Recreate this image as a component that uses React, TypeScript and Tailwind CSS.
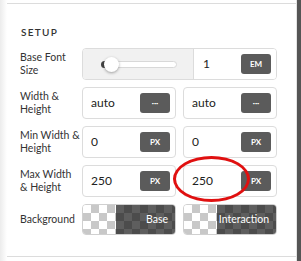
import React from "react";

const font = { fontFamily: 'Lato, "Open Sans", "Liberation Sans", sans-serif' };

function Btn({ children }: { children: React.ReactNode }) {
  return (
    <div className="flex h-[20px] w-[30px] shrink-0 items-center justify-center rounded-[3px] bg-[#5b5b5b] text-[8px] font-bold text-white">
      {children}
    </div>
  );
}

function Field({ value, unit }: { value: string; unit: string }) {
  return (
    <div className="flex h-[32px] w-[94px] items-center justify-between rounded-[4px] border border-[#dcdcdc] bg-white pl-[8px] pr-[5px] text-[12px] text-[#222]">
      <span>{value}</span>
      <Btn>{unit}</Btn>
    </div>
  );
}

function Label({ a, b }: { a: string; b?: string }) {
  return (
    <div className="w-[62px] shrink-0 whitespace-nowrap text-[10.5px] leading-[13px] text-[#333]">
      {a}
      {b && (
        <>
          <br />
          {b}
        </>
      )}
    </div>
  );
}

function Checker({ label }: { label: string }) {
  return (
    <div className="flex h-[31px] w-[94px] overflow-hidden rounded-[4px] border border-[#d0d0d0]">
      <div className="w-[33px] shrink-0 bg-[repeating-conic-gradient(#c8c8c8_0_25%,#ffffff_0_50%)] bg-[length:16px_16px]" />
      <div className="flex flex-1 items-center justify-end bg-[repeating-conic-gradient(#4c4c4c_0_25%,#5e5e5e_0_50%)] bg-[length:16px_16px] pr-[7px] text-[10.5px] text-white">
        {label}
      </div>
    </div>
  );
}

export default function App() {
  return (
    <div className="relative flex h-[261px] w-[301px] bg-white" style={font}>
      <div className="relative flex-1 border-r border-[#e4e4e4]">
        <div className="absolute left-0 top-0 h-full w-[7px] bg-gradient-to-r from-[#ececec] to-white" />
        <div className="mt-[3px] h-[254px] border-y border-[#dcdcdc]">
          <div className="relative pl-[21px] pt-[20px]">
            <div className="text-[10px] font-semibold leading-[16px] tracking-[1.3px] text-[#333]">SETUP</div>
            <div className="mt-[8px] -ml-px flex flex-col gap-[7px]">
              <div className="flex items-center">
                <Label a="Base Font" b="Size" />
                <div className="flex h-[32px] w-[195px] overflow-hidden rounded-[4px] border border-[#dcdcdc]">
                  <div className="relative flex w-[111px] items-center border-r border-[#dcdcdc] bg-[#f1f1f1]">
                    <div className="absolute left-[18px] right-[16px] h-[7px] rounded-full border border-[#d8d8d8] bg-white" />
                    <div className="absolute left-[18px] h-[7px] w-[8px] rounded-l-full bg-[#444]" />
                    <div className="absolute left-[21px] h-[15px] w-[15px] rounded-full bg-white shadow-[0_1px_3px_rgba(0,0,0,0.35)]" />
                  </div>
                  <div className="flex flex-1 items-center justify-between bg-white pl-[9px] pr-[5px] text-[12px] text-[#222]">
                    <span>1</span>
                    <Btn>EM</Btn>
                  </div>
                </div>
              </div>
              <div className="flex items-center">
                <Label a="Width &" b="Height" />
                <div className="flex gap-[7px]">
                  <Field value="auto" unit="···" />
                  <Field value="auto" unit="···" />
                </div>
              </div>
              <div className="flex items-center">
                <Label a="Min Width &" b="Height" />
                <div className="flex gap-[7px]">
                  <Field value="0" unit="PX" />
                  <Field value="0" unit="PX" />
                </div>
              </div>
              <div className="flex items-center">
                <Label a="Max Width" b="& Height" />
                <div className="relative flex gap-[7px]">
                  <Field value="250" unit="PX" />
                  <Field value="250" unit="PX" />
                  <div className="absolute left-[91px] top-[-9px] h-[46px] w-[77px] rounded-[50%] border-[3px] border-[#e01010]" />
                </div>
              </div>
              <div className="flex items-center">
                <Label a="Background" />
                <div className="flex gap-[7px]">
                  <Checker label="Base" />
                  <Checker label="Interaction" />
                </div>
              </div>
            </div>
          </div>
        </div>
      </div>
      <div className="w-[4px] bg-[#555]" />
    </div>
  );
}
